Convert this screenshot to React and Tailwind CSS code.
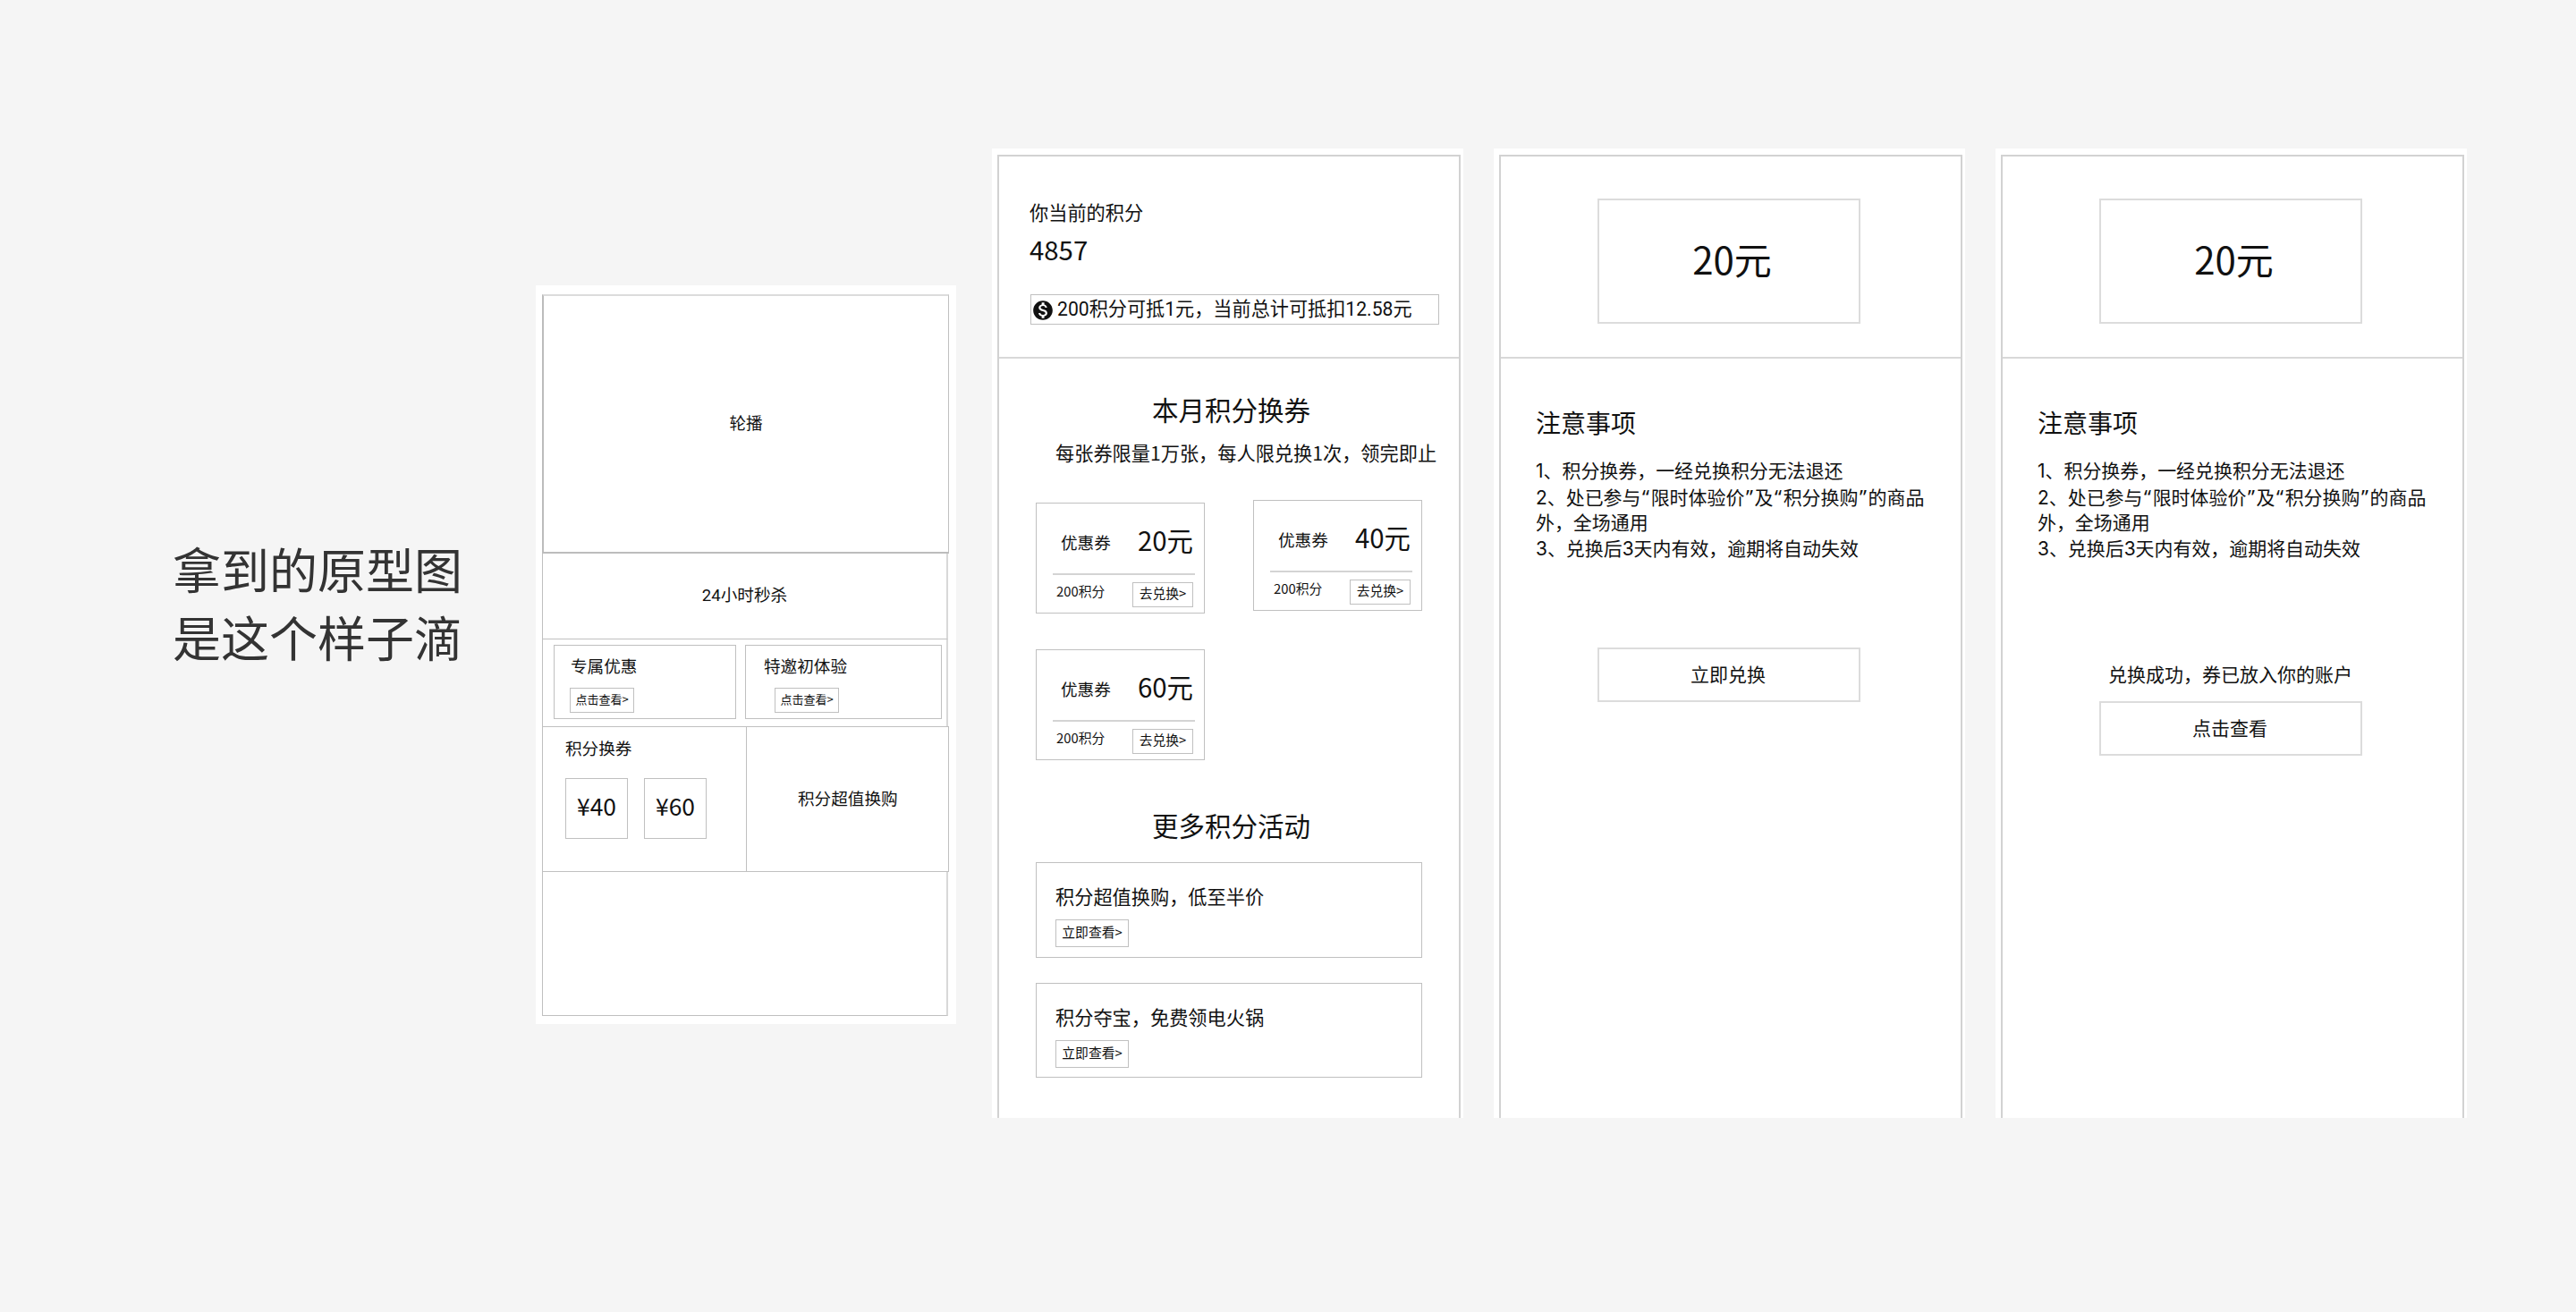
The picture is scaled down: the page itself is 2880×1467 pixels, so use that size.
import { MdMonetizationOn } from "react-icons/md";

const notes = [
  "1、积分换券，一经兑换积分无法退还",
  "2、处已参与“限时体验价”及“积分换购”的商品",
  "外，全场通用",
  "3、兑换后3天内有效，逾期将自动失效",
];

function NoteLine({ text }) {
  return (
    <div className="h-[29px]">
      {text.split(/([“”])/).map((part, i) =>
        part === "“" || part === "”" ? (
          <span key={i} className="inline-block w-[11.2px] text-center font-['Noto_Sans',sans-serif] text-[22px]">
            {part}
          </span>
        ) : (
          part
        ),
      )}
    </div>
  );
}

function SmallButton({ className, children }) {
  return (
    <div className={`flex shrink-0 items-center justify-center border border-[#c0c0c0] leading-none ${className}`}>
      {children}
    </div>
  );
}

function Home() {
  return (
    <section className="mt-[319px] h-[826px] w-[470px] bg-white pt-[10px] pl-[7px] text-[18.6px] leading-[28px]">
      <div className="flex h-[290px] w-[455px] items-center justify-center border-2 border-t-[#dcdcdc] border-r border-r-[#c0c0c0] border-b-[#bcbcbc] border-l-[#bcbcbc] pb-1">
        轮播
      </div>
      <div className="flex h-[96px] w-[454px] items-center justify-center border-r-2 border-b border-l border-r-[#d8d8d8] border-b-[#c0c0c0] border-l-[#c0c0c0] pb-px font-[Roboto,'Noto_Sans_CJK_SC',sans-serif]">
        24小时秒杀
      </div>
      <div className="flex h-[97px] w-[454px] gap-[10px] border-r-2 border-l border-r-[#d8d8d8] border-l-[#c0c0c0] pt-[6px] pl-[12px]">
        <div className="h-[83px] w-[204px] border border-[#c0c0c0] pt-[8px] pl-[17px]">
          <div className="pl-px">专属优惠</div>
          <SmallButton className="mt-[11px] h-[28px] w-[72px] pb-[3px] text-[13px]">点击查看&gt;</SmallButton>
        </div>
        <div className="h-[83px] w-[220px] border border-[#c0c0c0] pt-[8px] pl-[20px]">
          <div>特邀初体验</div>
          <SmallButton className="mt-[11px] ml-[12px] h-[28px] w-[72px] pb-[3px] text-[13px]">点击查看&gt;</SmallButton>
        </div>
      </div>
      <div className="flex h-[163px] w-[455px] border border-[#c0c0c0]">
        <div className="w-[228px] border-r border-[#c0c0c0] pt-[9px] pl-[25px]">
          <div>积分换券</div>
          <div className="mt-[20px] flex gap-[18px] text-[26.4px]">
            <SmallButton className="h-[68px] w-[70px] pb-[6px]">¥40</SmallButton>
            <SmallButton className="h-[68px] w-[70px] pb-[6px]">¥60</SmallButton>
          </div>
        </div>
        <div className="pt-[65px] pl-[57px]">积分超值换购</div>
      </div>
      <div className="h-[161px] w-[454px] border-r-2 border-b border-l border-r-[#d8d8d8] border-b-[#c0c0c0] border-l-[#c0c0c0]" />
    </section>
  );
}

function Phone({ className, header, children }) {
  return (
    <section className={`mt-[166px] h-[1084px] w-[527px] shrink-0 bg-white pt-[7px] pl-[6px] ${className}`}>
      <div className="h-[1077px] w-[518px] border-x-2 border-t-2 border-[#d2d2d2]">
        <div className="h-[226px] border-b-2 border-[#d8d8d8]">{header}</div>
        {children}
      </div>
    </section>
  );
}

function Coupon({ amount, className }) {
  return (
    <div className={`h-[124px] w-[189px] shrink-0 border border-[#c0c0c0] pt-[20px] ${className}`}>
      <div className="flex justify-between pr-[12px] pl-[27px]">
        <span className="mt-[9px] text-[18.6px] leading-[28px]">优惠券</span>
        <span className="text-[29.4px] leading-[40px]">{amount}元</span>
      </div>
      <div className="mt-[18px] ml-[18px] h-[2px] w-[159px] bg-[#d4d4d4]" />
      <div className="mt-[7px] flex justify-between pr-[12px] pl-[22px] text-[14.8px]">
        <span className="leading-[22px]">200积分</span>
        <SmallButton className="mt-px h-[28px] w-[68px] pb-[3px]">去兑换&gt;</SmallButton>
      </div>
    </div>
  );
}

function Activity({ title, className }) {
  return (
    <div className={`ml-[41px] w-[432px] border border-[#c0c0c0] pt-[22px] pl-[21px] ${className}`}>
      <div className="text-[21.2px] leading-[30px]">{title}</div>
      <SmallButton className="mt-[11px] h-[31px] w-[82px] pb-[2px] text-[14.8px]">立即查看&gt;</SmallButton>
    </div>
  );
}

function Points() {
  return (
    <Phone
      className="ml-[40px]"
      header={
        <div className="pt-[47px] pl-[34px]">
          <div className="text-[21.2px] leading-[30px]">你当前的积分</div>
          <div className="mt-[6px] text-[29.4px] leading-[40px]">4857</div>
          <div className="mt-[31px] ml-px flex h-[34px] w-[457px] items-center border border-[#c0c0c0] font-[Roboto,'Noto_Sans_CJK_SC',sans-serif] text-[21.15px] leading-[30px] whitespace-nowrap">
            <MdMonetizationOn className="mt-px size-[26px] shrink-0" />
            <span className="ml-[3px]">200积分可抵1元，当前总计可抵扣12.58元</span>
          </div>
        </div>
      }
    >
      <div className="mt-[36px] ml-[171px] text-[29.5px] leading-[40px]">本月积分换券</div>
      <div className="mt-[14px] ml-[63px] text-[21.2px] leading-[30px] whitespace-nowrap">
        每张券限量1万张，每人限兑换1次，领完即止
      </div>
      <div className="mt-[38px] ml-[41px] flex items-start gap-[54px]">
        <Coupon amount="20" className="mt-[3px]" />
        <Coupon amount="40" />
      </div>
      <Coupon amount="60" className="mt-[40px] ml-[41px]" />
      <div className="mt-[52px] ml-[171px] text-[29.5px] leading-[40px]">更多积分活动</div>
      <Activity title="积分超值换购，低至半价" className="mt-[22px] h-[107px]" />
      <Activity title="积分夺宝，免费领电火锅" className="mt-[28px] h-[106px]" />
    </Phone>
  );
}

function Detail({ children }) {
  return (
    <Phone
      className="ml-[34px]"
      header={
        <div className="pt-[47px] pl-[108px]">
          <div className="flex h-[140px] w-[294px] items-center justify-center border-2 border-[#dcdcdc] pb-[8px] pl-[7px] text-[42px]">
            20元
          </div>
        </div>
      }
    >
      <div className="mt-[51px] ml-[39px] text-[28px] leading-[40px]">注意事项</div>
      <div className="mt-[20px] ml-[39px] font-[Inter,'Noto_Sans_CJK_SC',sans-serif] text-[20.95px] leading-[29px] whitespace-nowrap">
        {notes.map((line) => (
          <NoteLine key={line} text={line} />
        ))}
      </div>
      {children}
    </Phone>
  );
}

function WideButton({ className, children }) {
  return (
    <div className={`ml-[108px] flex h-[61px] w-[294px] items-center justify-center border-2 border-[#dcdcdc] pr-[2px] pb-[3px] text-[21px] leading-[30px] ${className}`}>
      {children}
    </div>
  );
}

export default function App() {
  return (
    <main className="flex h-[1467px] w-[2880px] items-start overflow-hidden bg-[#f5f5f5] font-['Noto_Sans_CJK_SC',sans-serif] text-[#111]">
      <h1 className="mt-[598px] ml-[193px] w-[406px] shrink-0 text-[54px] leading-[76px] text-[#333]">
        <div>拿到的原型图</div>
        <div>是这个样子滴</div>
      </h1>
      <Home />
      <Points />
      <Detail>
        <WideButton className="mt-[96px]">立即兑换</WideButton>
      </Detail>
      <Detail>
        <div className="mt-[110px] ml-[118px] text-[21px] leading-[30px]">兑换成功，券已放入你的账户</div>
        <WideButton className="mt-[16px]">点击查看</WideButton>
      </Detail>
    </main>
  );
}
